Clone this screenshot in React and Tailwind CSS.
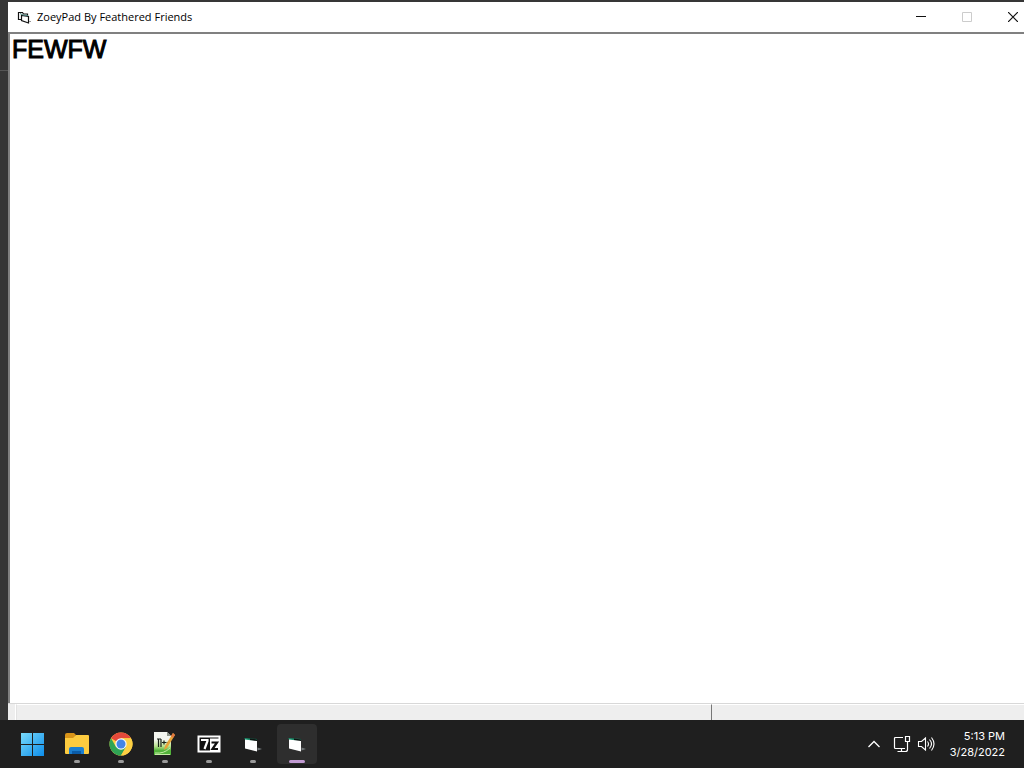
import { useState } from 'react';
import clsx from 'clsx';

const FormIcon = () => (
  <svg width="14" height="14" viewBox="0 0 14 14" fill="none" aria-hidden="true">
    <path d="M4.500 9.500h-3v-7h4l1 1.500h4v2" stroke="#111" strokeWidth="1.200" />
    <path d="M4.500 10.500v-5l7 1v6.500z" fill="#fff" stroke="#111" strokeWidth="1.200" />
    <path d="M3 3.500l3 1.500 5 .5" stroke="#3f7d78" />
    <path d="M12 11.500h2" stroke="#999" />
  </svg>
);

const StartIcon = () => (
  <svg width="24" height="24" viewBox="0 0 24 24" aria-hidden="true">
    <defs>
      <linearGradient id="start" x1="0" y1="0" x2="24" y2="24" gradientUnits="userSpaceOnUse">
        <stop stopColor="#7bdcfb" />
        <stop offset="1" stopColor="#0a8bea" />
      </linearGradient>
    </defs>
    <path d="M0 1h11v11H0zM12 1h11v11H12zM0 13h11v11H0zM12 13h11v11H12z" fill="url(#start)" />
  </svg>
);

const FolderIcon = () => (
  <svg width="26" height="24" viewBox="0 0 26 24" aria-hidden="true">
    <path d="M1 3q0-2 2-2h7l2 2-2 3H1z" fill="#d99419" />
    <path d="M1 6h8l3-3h12q1 0 1 1v17q0 1-1 1H2q-1 0-1-1z" fill="#fccb3f" />
    <path d="M5 22v-5q0-2 2-2h11q2 0 2 2v5z" fill="#1b7fd0" />
    <path d="M8 22v-3h9v3z" fill="#0b5ca8" />
  </svg>
);

const ChromeIcon = () => (
  <svg width="24" height="24" viewBox="0 0 24 24" aria-hidden="true">
    <circle cx="12" cy="12" r="11.500" fill="#fdd043" />
    <path d="M12 12 2.040 6.250A11.500 11.500 0 0 1 21.960 6.250H12z" fill="#e5493a" />
    <path d="M2.040 6.250A11.500 11.500 0 0 0 12 23.500L17 14.900 12 12 7 14.900z" fill="#2fa455" />
    <path d="M12 6.250h9.960A11.500 11.500 0 0 1 12 23.500l5-8.600z" fill="#fdd043" />
    <circle cx="12" cy="12" r="5.700" fill="#f4f7fb" />
    <circle cx="12" cy="12" r="4.500" fill="#4285e8" />
  </svg>
);

const NotepadIcon = () => (
  <svg width="24" height="26" viewBox="0 0 24 26" aria-hidden="true">
    <defs>
      <linearGradient id="page" x1="0" y1="2" x2="0" y2="24" gradientUnits="userSpaceOnUse">
        <stop offset="0.3" stopColor="#f4f6f0" />
        <stop offset="0.6" stopColor="#b9e28e" />
        <stop offset="0.8" stopColor="#52b23a" />
      </linearGradient>
    </defs>
    <path d="M1 1h13l4 4v19H1z" fill="url(#page)" />
    <path d="M14 1v4h4z" fill="#8f968b" />
    <path d="M2 22q9 1 15-5M2 23.500h15" stroke="#c4eba4" fill="none" />
    <path d="M4 8h4M5.500 8v8M8 8v8M9 11.500h4M11 9.500v4M13.500 11.500h3" stroke="#171f18" strokeWidth="1.200" />
    <path d="M20 2l2 2-8 13-3 2 1-4z" fill="#e6a338" />
    <path d="M20 2l2 2-2 3-2-2z" fill="#e0773f" />
  </svg>
);

const SevenZipIcon = () => (
  <svg width="24" height="18" viewBox="0 0 24 18" aria-hidden="true">
    <path d="M1.500 1.500h21v15h-21z" fill="#fff" stroke="#fff" strokeWidth="2" />
    <path d="M2.500 2.500H13v13H2.500z" fill="#111" />
    <path d="M4 5h6.500v1L7.500 14" stroke="#fff" strokeWidth="2.200" fill="none" />
    <path d="M14.500 7.500H20L15.500 14H21" stroke="#111" strokeWidth="2.200" fill="none" />
    <path d="M13 3h8.500" stroke="#111" />
  </svg>
);

const PadIcon = () => (
  <svg width="20" height="18" viewBox="0 0 20 18" aria-hidden="true">
    <path d="M1.500 3l5 .5L14 4v3L2 5z" fill="#16916c" />
    <path d="M7 3.500l7 1v2l-7-1z" fill="#0c1512" />
    <path d="M2 4.500l12 1.500v10.500L2 13.500z" fill="#fff" />
    <path d="M14.500 12.500l4.500 1.500-4.500 1.500z" fill="#73787a" />
  </svg>
);

const apps = [
  { name: 'Start', Icon: StartIcon },
  { name: 'File Explorer', Icon: FolderIcon, running: true },
  { name: 'Google Chrome', Icon: ChromeIcon, running: true },
  { name: 'Notepad++', Icon: NotepadIcon, running: true },
  { name: '7-Zip', Icon: SevenZipIcon, running: true },
  { name: 'Project', Icon: PadIcon, running: true },
  { name: 'ZoeyPad', Icon: PadIcon, running: true, active: true },
];

const TitleBar = () => (
  <header className="flex h-[30px] shrink-0 items-center justify-between bg-white pl-[9px]">
    <div className="flex items-center gap-[6px]">
      <FormIcon />
      <h1 className="font-['Open_Sans',sans-serif] text-[11px] leading-4 text-black">ZoeyPad By Feathered Friends</h1>
    </div>
    <div className="flex h-full gap-6">
      <button aria-label="Minimize" className="flex w-[22px] items-center justify-center">
        <svg width="10" height="10" viewBox="0 0 10 10"><path d="M0 4.500h10" stroke="#111" /></svg>
      </button>
      <button aria-label="Maximize" disabled className="flex w-[22px] items-center justify-center">
        <svg width="10" height="10" viewBox="0 0 10 10"><path d="M.5.5h9v9h-9z" stroke="#ccc" fill="none" /></svg>
      </button>
      <button aria-label="Close" className="flex w-[22px] items-center justify-center">
        <svg width="10" height="10" viewBox="0 0 10 10"><path d="M0 0l10 10M10 0L0 10" stroke="#111" strokeWidth="1.200" /></svg>
      </button>
    </div>
  </header>
);

const StatusBar = () => (
  <footer className="flex h-[17px] shrink-0 border-t border-[#d8d8d8] bg-[#eeeeee]">
    <div className="w-2 border-r border-white" />
    <div className="flex-1 border-t border-l border-t-white border-l-[#e2e2e2]" />
    <div className="w-[313px] border-t border-l border-t-white border-l-[#777777]" />
  </footer>
);

const Taskbar = () => (
  <nav aria-label="Taskbar" className="flex h-12 shrink-0 items-center justify-between bg-[#1f1f1f] pr-[19px] pl-[13px]">
    <div className="flex gap-1">
      {apps.map(({ name, Icon, running, active }) => (
        <button
          key={name}
          aria-label={name}
          className={clsx('relative flex size-10 items-center justify-center rounded', active && 'bg-[#2e2e2e]')}
        >
          <Icon />
          {running && (
            <span className={clsx('absolute bottom-px h-[3px] rounded-full', active ? 'w-4 bg-[#c29bd3]' : 'w-[6px] bg-[#9a9a9a]')} />
          )}
        </button>
      ))}
    </div>
    <div className="flex items-center text-white">
      <button aria-label="Show hidden icons" className="mr-3">
        <svg width="14" height="10" viewBox="0 0 14 10" fill="none"><path d="M1.500 8L7 2.500 12.500 8" stroke="currentColor" strokeWidth="1.300" /></svg>
      </button>
      <button aria-label="Network" className="mr-[6px]">
        <svg width="18" height="18" viewBox="0 0 18 18" fill="none" stroke="currentColor" strokeWidth="1.200">
          <path d="M10 2.500H2.500q-1 0-1 1v9q0 1 1 1H12M4.500 16.500H13M8.500 13.500v3M12.500 1.500h4v5h-4zM14.500 6.500v8q0 2-2 2" />
        </svg>
      </button>
      <button aria-label="Volume" className="mr-[15px]">
        <svg width="18" height="18" viewBox="0 0 18 18" fill="none" stroke="currentColor" strokeWidth="1.100">
          <path d="M1.500 6.500h3L8.500 3v12l-4-3.500h-3zM10.500 6.500q2 2.500 0 5M12.500 4.500q4 4.500 0 9M14.500 2.500q5 6.500 0 13" />
        </svg>
      </button>
      <div className="text-right font-[Inter,sans-serif] text-[11px] leading-4">
        <p>5:13 PM</p>
        <p>3/28/2022</p>
      </div>
    </div>
  </nav>
);

const App = () => {
  const [text, setText] = useState('FEWFW');

  return (
    <div className="flex h-screen flex-col bg-[#363636]">
      <div className="flex min-h-0 flex-1 pt-[2px]">
        <div className="w-2 shrink-0 pt-[68px]">
          <div className="border-t border-[#555555]" />
        </div>
        <main className="flex min-w-0 flex-1 flex-col bg-white">
          <TitleBar />
          <textarea
            aria-label="Document"
            value={text}
            onChange={(e) => setText(e.target.value)}
            spellCheck={false}
            className="block w-full flex-1 resize-none border-t-2 border-l-2 border-[#808080] bg-white px-[2px] py-px font-['Liberation_Sans',Arial,sans-serif] text-[25px] leading-7 text-black outline-none [-webkit-text-stroke:1px_black]"
          />
          <StatusBar />
        </main>
      </div>
      <Taskbar />
    </div>
  );
};

export default App;
